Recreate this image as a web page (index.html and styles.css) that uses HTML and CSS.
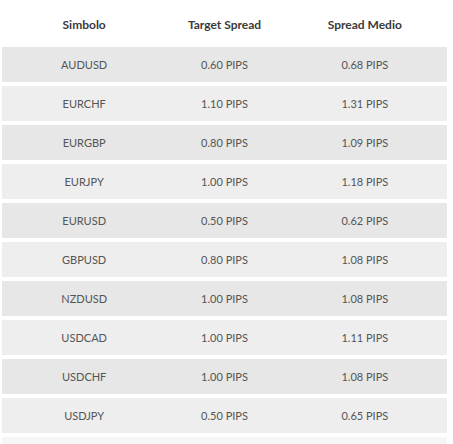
FILE: index.html
```html
<!DOCTYPE html>
<html>
<head>
<meta charset="utf-8">
<link rel="stylesheet" href="styles.css">
</head>
<body>
<div class="table">
  <div class="row head">
    <div>Simbolo</div><div>Target Spread</div><div>Spread Medio</div>
  </div>
  <div class="row odd"><div>AUDUSD</div><div>0.60 PIPS</div><div>0.68 PIPS</div></div>
  <div class="row even"><div>EURCHF</div><div>1.10 PIPS</div><div>1.31 PIPS</div></div>
  <div class="row odd"><div>EURGBP</div><div>0.80 PIPS</div><div>1.09 PIPS</div></div>
  <div class="row even"><div>EURJPY</div><div>1.00 PIPS</div><div>1.18 PIPS</div></div>
  <div class="row odd"><div>EURUSD</div><div>0.50 PIPS</div><div>0.62 PIPS</div></div>
  <div class="row even"><div>GBPUSD</div><div>0.80 PIPS</div><div>1.08 PIPS</div></div>
  <div class="row odd"><div>NZDUSD</div><div>1.00 PIPS</div><div>1.08 PIPS</div></div>
  <div class="row even"><div>USDCAD</div><div>1.00 PIPS</div><div>1.11 PIPS</div></div>
  <div class="row odd"><div>USDCHF</div><div>1.00 PIPS</div><div>1.08 PIPS</div></div>
  <div class="row even"><div>USDJPY</div><div>0.50 PIPS</div><div>0.65 PIPS</div></div>
  <div class="tail"></div>
</div>
</body>
</html>
```
FILE: styles.css
```css
html, body {
  margin: 0;
  padding: 0;
  background: #ffffff;
  overflow: hidden;
}
.table {
  margin-left: 2px;
  width: 445px;
  display: flex;
  flex-direction: column;
  gap: 4px;
  font-family: Lato, "Liberation Sans", sans-serif;
}
.row {
  box-sizing: border-box;
  display: grid;
  grid-template-columns: 1fr 1fr 1fr;
  padding: 0 12px;
  height: 35px;
  align-items: center;
  text-align: center;
  font-size: 11px;
  color: #555555;
}
.head {
  height: 43px;
  padding-top: 6px;
  font-size: 12px;
  font-weight: bold;
  color: #3a3a3a;
  background: #ffffff;
}
.odd { background: #e6e7e6; }
.even { background: #eeeeee; }
.tail {
  height: 7px;
  background: #f6f6f6;
}
```
